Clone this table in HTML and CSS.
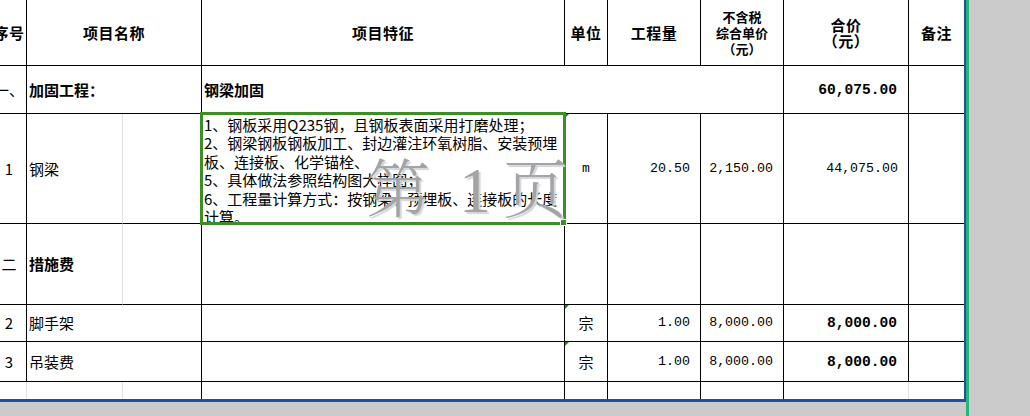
FILE: index.html
```html
<!DOCTYPE html>
<html lang="zh-CN">
<head>
<meta charset="utf-8">
<title>工程量清单</title>
<link rel="stylesheet" href="styles.css">
</head>
<body>
<div class="sheet">
  <div class="grid">
    <!-- header -->
    <div class="c hd center">序号</div>
    <div class="c hd center span2">项目名称</div>
    <div class="c hd center">项目特征</div>
    <div class="c hd center">单位</div>
    <div class="c hd center">工程量</div>
    <div class="c hd center small">不含税<br>综合单价<br>（元）</div>
    <div class="c hd center tight">合价<br>（元）</div>
    <div class="c hd center nr">备注</div>

    <!-- 一 -->
    <div class="c center">一、</div>
    <div class="c b span2">加固工程：</div>
    <div class="c b span4">钢梁加固</div>
    <div class="c num nb">60,075.00</div>
    <div class="c nr"></div>

    <!-- 1 -->
    <div class="c center">1</div>
    <div class="c gr">钢梁</div>
    <div class="c"></div>
    <div class="c desc">1、钢板采用Q235钢，且钢板表面采用打磨处理；<br>2、钢梁钢板钢板加工、封边灌注环氧树脂、安装预埋<br>板、连接板、化学锚栓、<br>5、具体做法参照结构图大样图；<br>6、工程量计算方式：按钢梁、预埋板、连接板的长度<br>计算。<div class="selection"><span class="handle"></span></div></div>
    <div class="c center unit flag">m</div>
    <div class="c num">20.50</div>
    <div class="c num">2,150.00</div>
    <div class="c num">44,075.00</div>
    <div class="c nr"></div>

    <!-- 二 -->
    <div class="c center">二</div>
    <div class="c gr b">措施费</div>
    <div class="c"></div>
    <div class="c"></div>
    <div class="c"></div>
    <div class="c"></div>
    <div class="c"></div>
    <div class="c"></div>
    <div class="c nr"></div>

    <!-- 2 -->
    <div class="c center">2</div>
    <div class="c span2">脚手架</div>
    <div class="c"></div>
    <div class="c center flag">宗</div>
    <div class="c num">1.00</div>
    <div class="c num">8,000.00</div>
    <div class="c num nb">8,000.00</div>
    <div class="c nr"></div>

    <!-- 3 -->
    <div class="c center">3</div>
    <div class="c span2">吊装费</div>
    <div class="c"></div>
    <div class="c center flag">宗</div>
    <div class="c num">1.00</div>
    <div class="c num">8,000.00</div>
    <div class="c num nb">8,000.00</div>
    <div class="c nr"></div>

    <!-- last (partial) -->
    <div class="c last gr"></div>
    <div class="c last gr"></div>
    <div class="c last"></div>
    <div class="c last"></div>
    <div class="c last"></div>
    <div class="c last"></div>
    <div class="c last"></div>
    <div class="c last gr"></div>
    <div class="c last nr"></div>
  </div>
  <div class="watermark">第<span class="wm-num">1</span>页</div>
</div>
<div class="page-edge"></div>
</body>
</html>
```

FILE: styles.css
```css
html, body {
  margin: 0;
  padding: 0;
}
body {
  width: 1030px;
  height: 416px;
  overflow: hidden;
  background: #cbcbcb;
  display: flex;
  align-items: flex-start;
  font-family: "Noto Sans CJK SC", "Noto Sans", sans-serif;
  color: #000;
}
.sheet {
  position: relative;
  width: 964px;
  height: 399px;
  background: #fff;
  border-right: 2px solid #1f4f9e;
  border-bottom: 3px solid #1f4f9e;
  overflow: hidden;
  flex: none;
}
.page-edge {
  width: 3px;
  height: 416px;
  background: #27b57a;
  flex: none;
}
.grid {
  margin-left: -8px;
  width: 972px;
  display: grid;
  grid-template-columns: 35px 96px 79px 363px 43px 93px 83px 125px 55px;
  grid-template-rows: 66px 48px 110px 81px 37px 40px 17px;
}
.c {
  box-sizing: border-box;
  border-right: 1px solid #000;
  border-bottom: 1px solid #000;
  display: flex;
  align-items: center;
  padding: 0 2px;
  font-size: 15px;
  line-height: 18px;
  white-space: nowrap;
  position: relative;
}
.c.center {
  justify-content: center;
  text-align: center;
}
.c.hd {
  font-weight: bold;
  letter-spacing: 0.5px;
}
.c.hd.small {
  font-size: 13px;
  line-height: 16px;
  letter-spacing: 0;
}
.c.hd.tight {
  line-height: 16px;
}
.c.b {
  font-weight: bold;
}
.span2 {
  grid-column: span 2;
}
.span4 {
  grid-column: span 4;
}
.c.gr {
  border-right-color: #e1e1e1;
}
.c.nr {
  border-right: none;
}
.c.last {
  border-bottom: none;
}
.c.num {
  justify-content: flex-end;
  padding-right: 10px;
  font-family: "Liberation Mono", monospace;
  font-size: 13.3px;
}
.c.num.nb {
  font-weight: bold;
  font-size: 14.6px;
  padding-right: 11px;
}
.c.unit {
  font-family: "Liberation Mono", monospace;
  font-size: 13px;
}
.c.desc {
  display: block;
  padding: 2px 2px 0 2px;
  line-height: 18.4px;
  font-size: 15px;
}
.flag::before {
  content: "";
  position: absolute;
  left: 0;
  top: 0;
  width: 0;
  height: 0;
  border-top: 4px solid #1e8a1e;
  border-right: 4px solid transparent;
}
.selection {
  position: absolute;
  left: -2px;
  top: -2px;
  width: 366px;
  height: 113px;
  box-sizing: border-box;
  border: 3px solid #3e8e26;
  z-index: 3;
}
.handle {
  position: absolute;
  right: -4px;
  bottom: -4px;
  width: 5px;
  height: 5px;
  background: #3e8e26;
  border: 1px solid #fff;
}
.watermark {
  position: absolute;
  left: 366px;
  top: 159px;
  font-family: "Liberation Serif", "Noto Serif CJK SC", "Noto Sans CJK SC", serif;
  font-size: 64px;
  line-height: 64px;
  font-weight: 300;
  color: #a4a4a4;
  text-shadow: 2px 2px 1px #d2d6dd;
  white-space: nowrap;
  z-index: 4;
  pointer-events: none;
}
.wm-num {
  display: inline-block;
  margin: 0 12px 0 29px;
}
```
